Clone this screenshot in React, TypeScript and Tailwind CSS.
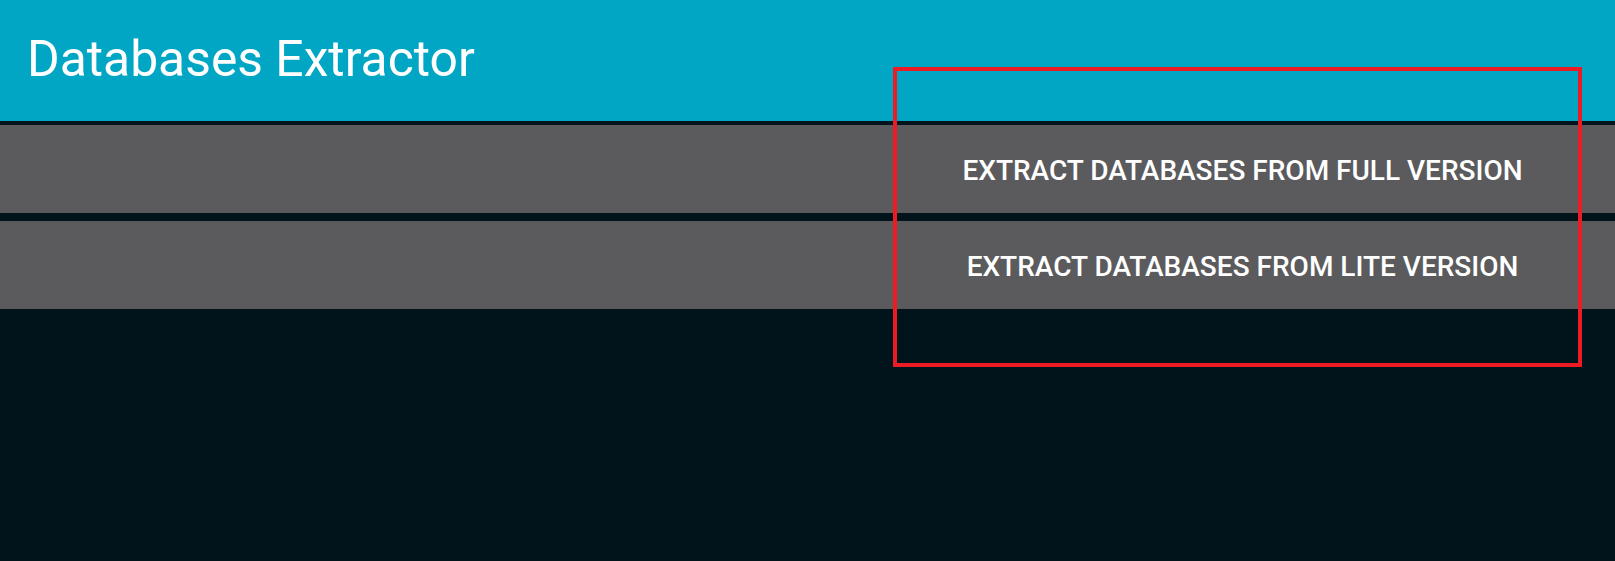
import React from 'react';

const buttons = ['EXTRACT DATABASES FROM FULL VERSION', 'EXTRACT DATABASES FROM LITE VERSION'];

const App: React.FC = () => {
  return (
    <div className="relative w-[1615px] h-[561px] bg-[#01141c] overflow-hidden font-['Roboto',sans-serif]">
      <div className="h-[121px] bg-[#02a6c5] flex items-start pl-[27px] pt-[30px]">
        <h1 className="text-white text-[49.8px] leading-[58px] font-normal">Databases Extractor</h1>
      </div>
      <div className="flex flex-col gap-[8px] pt-[4px]">
        {buttons.map((label) => (
          <div key={label} className="h-[88px] bg-[#5b5b5d] flex">
            <div className="ml-auto w-[745px] flex items-center justify-center pt-[3px]">
              <span className="text-white text-[28px] font-medium">{label}</span>
            </div>
          </div>
        ))}
      </div>
      {/* annotation box */}
      <div className="absolute left-[893px] top-[67px] w-[689px] h-[300px] border-[4.5px] border-[#ed1c24]" />
    </div>
  );
};

export default App;
